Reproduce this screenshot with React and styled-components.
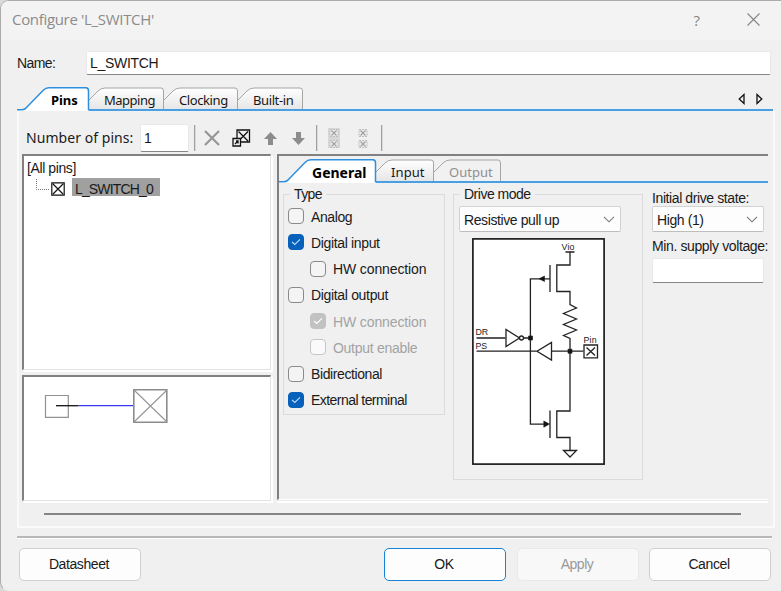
import React from "react";
import styled, { createGlobalStyle, css } from "styled-components";

const GlobalStyle = createGlobalStyle`
  * { box-sizing: border-box; }
  html, body { margin: 0; padding: 0; background: #d9d9d9; overflow: hidden; }
  button { font: inherit; padding: 0; }
  svg { display: block; flex: none; }
`;

const Dialog = styled.div`
  width: 791px;
  height: 591px;
  display: flex;
  flex-direction: column;
  background: #f0f0f0;
  border: 1px solid #ababab;
  border-bottom-color: #f0f0f0;
  border-radius: 9px 9px 0 9px;
  overflow: hidden;
  font-family: "Liberation Sans", Arial, sans-serif;
  font-size: 14px;
  color: #1a1a1a;
`;

const Text = styled.span`
  white-space: pre;
  line-height: 16px;
  letter-spacing: ${(p) => p.$ls ?? -0.4}px;
  color: ${(p) => (p.$muted ? "#a3a3a3" : "inherit")};
`;

const TitleBar = styled.header`
  height: 39px;
  flex: none;
  display: flex;
  align-items: center;
  padding: 0 30px 2px 11px;
  background: #f3f3f3;
  color: #8b8b8b;
  font: 15px "Open Sans", sans-serif;
`;

const Title = styled.span`
  flex: 1;
  letter-spacing: -0.32px;
  padding-bottom: 1px;
`;

const TitleButton = styled.button`
  display: flex;
  border: 0;
  background: none;
  color: #858585;
  font: 15px "Open Sans", sans-serif;
  margin-left: ${(p) => p.$gap || 0}px;
`;

const NameRow = styled.div`
  display: flex;
  align-items: center;
  height: 24px;
  flex: none;
  margin: 11px 19px 0 16px;
`;

const NameLabel = styled.label`
  width: 69px;
  display: flex;
`;

const Field = styled.div`
  display: flex;
  align-items: center;
  width: ${(p) => (p.$w ? `${p.$w}px` : "auto")};
  flex: ${(p) => (p.$w ? "none" : 1)};
  height: ${(p) => p.$h}px;
  padding: 0 0 1px 3px;
  background: #fff;
  border: 1px solid #e8e8e8;
  border-bottom: 1px solid #868686;
  border-radius: 2px;
`;

const TabStrip = styled.div`
  display: flex;
  align-items: flex-end;
  flex: none;
  height: ${(p) => p.$h}px;
  width: ${(p) => (p.$w ? `${p.$w}px` : "auto")};
  border-bottom: 2px solid #4a9fe3;
`;

const TabItem = styled.div`
  position: relative;
  width: ${(p) => p.$w}px;
  height: 24px;
  margin-bottom: -2px;
  padding: 5px 0 0 ${(p) => p.$text}px;
  font: ${(p) => (p.$active ? "bold 13px" : "13px")} "Noto Sans", sans-serif;
  color: ${(p) => (p.$muted ? "#8f8f8f" : "#171717")};
  ${(p) => p.$active && css`z-index: 1; color: #000;`}
`;

const TabShape = styled.svg`
  position: absolute;
  left: 0;
  top: 0;
`;

const TabCaption = styled.span`
  position: relative;
  white-space: pre;
  display: block;
  line-height: 17px;
  letter-spacing: ${(p) => p.$ls}px;
  font-size: ${(p) => p.$size || 13}px;
`;

function Tab({ w, text, ls, size, active, muted, children }) {
  return (
    <TabItem $w={w} $text={text} $active={active} $muted={muted}>
      <TabShape width={w + 1} height="24">
        <defs>
          <linearGradient id="tabFade" x1="0" y1="0" x2="0" y2="1">
            <stop offset="0" stopColor="#ffffff" />
            <stop offset="1" stopColor="#e6e6e6" />
          </linearGradient>
        </defs>
        {active ? (
          <>
            <path d={`M0 24V23H7L26 3.5Q28 1 32 1H${w - 3}Q${w - 0.5} 1 ${w - 0.5} 4V24Z`} fill="#fff" />
            <path d={`M0 22.8H5Q8 22.8 10 20L26 3.5Q28.500 .8 32 .8H${w - 3}Q${w - 0.5} 1 ${w - 0.5} 4V23`} fill="none" stroke="#2f8fdf" strokeWidth="1.5" />
          </>
        ) : (
          <>
            <path d={`M0 22V13L9 4Q12 1 16 1H${w - 3}Q${w - 0.5} 1 ${w - 0.5} 4V22Z`} fill={muted ? "#f1f1f1" : "url(#tabFade)"} />
            <path d={`M0 13L9 4Q12 1 16 1H${w - 3}Q${w - 0.5} 1 ${w - 0.5} 4V22`} fill="none" stroke="#a5a5a5" />
          </>
        )}
      </TabShape>
      <TabCaption $ls={ls} $size={size}>{children}</TabCaption>
    </TabItem>
  );
}

const TabArrows = styled.div`
  display: flex;
  gap: 11px;
  margin: 0 10px 4px auto;
`;

const TabPage = styled.section`
  width: 758px;
  height: 441px;
  margin: 12px 0 0 16px;
  flex: none;
  display: flex;
  flex-direction: column;
`;

const PageBody = styled.div`
  flex: 1;
  display: flex;
  flex-direction: column;
  border: 2px solid #fafafa;
  border-top: 0;
  padding-left: 3px;
`;

const Toolbar = styled.div`
  height: 43px;
  flex: none;
  display: flex;
  align-items: center;
  padding: 11px 0 0 4px;
`;

const CountLabel = styled.label`
  width: 114px;
  white-space: nowrap;
  font: 14px "Noto Sans", sans-serif;
  letter-spacing: 0.05px;
  padding-bottom: 2px;
`;

const Divider = styled.i`
  width: 2px;
  height: 26px;
  background: #a0a0a0;
  border-right: 1px solid #dadada;
  margin: 0 ${(p) => p.$after || 0}px 0 ${(p) => p.$before}px;
`;

const ToolButton = styled.button`
  display: flex;
  border: 0;
  background: none;
  margin-left: ${(p) => p.$gap}px;
`;

const Panes = styled.div`
  display: flex;
  gap: 6px;
  height: 348px;
`;

const LeftColumn = styled.div`
  width: 249px;
  display: flex;
  flex-direction: column;
  gap: 5px;
`;

const Sunken = styled.div`
  height: ${(p) => p.$h}px;
  width: ${(p) => (p.$w ? `${p.$w}px` : "auto")};
  background: ${(p) => p.$bg || "#fff"};
  border: 2px solid #818181;
  border-right: ${(p) => (p.$bg ? "0" : "1px solid #e2e2e2")};
  border-bottom: 1px solid ${(p) => (p.$bg ? "#fff" : "#e2e2e2")};
  box-shadow: ${(p) => (p.$bg ? "0 1px 0 #e8e8e8, 0 3px 0 #fff" : "2px 2px 0 #fff")};
`;

const TreeRoot = styled.div`
  display: flex;
  padding: 4px 0 0 3px;
`;

const TreeLeaf = styled.div`
  display: flex;
  align-items: flex-end;
  padding-left: 12px;
  height: 20px;
`;

const Selected = styled.div`
  width: 88px;
  height: 18px;
  margin: 0 0 0 7px;
  padding: 3px 0 0 3px;
  display: flex;
  background: #a0a0a0;
  line-height: 15px;
`;

const GeneralPage = styled.div`
  display: flex;
  align-items: flex-start;
  padding: 3px 0 0 4px;
`;

const Group = styled.fieldset`
  width: ${(p) => p.$w}px;
  height: ${(p) => p.$h}px;
  min-width: 0;
  flex: none;
  margin: 0 ${(p) => p.$gap}px 0 0;
  padding: 0;
  border: 1px solid #dcdcdc;
`;

const Legend = styled.legend`
  height: 16px;
  display: flex;
  margin-left: 6px;
  padding: 0 4px;
`;

const CheckList = styled.div`
  padding-top: 1px;
`;

const CheckRow = styled.div`
  height: 26.25px;
  display: flex;
  align-items: center;
  gap: 7px;
  padding-left: ${(p) => (p.$indent ? 26 : 4)}px;
`;

const CheckText = styled(Text)`
  padding-top: 1px;
`;

const Box = styled.span`
  width: 16px;
  height: 16px;
  display: flex;
  align-items: center;
  justify-content: center;
  border-radius: 4px;
  border: 1.5px solid ${(p) => (p.$disabled ? "#c6c6c6" : "#8a8a8a")};
  background: ${(p) => (p.$disabled ? "#fafafa" : "#f4f4f4")};
  ${(p) => p.$checked && css`
    border-color: ${p.$disabled ? "#c2c2c2" : "#0760b9"};
    background: ${p.$disabled ? "#c2c2c2" : "#0760b9"};
  `}
`;

function Check({ label, ls, indent, checked, disabled }) {
  return (
    <CheckRow $indent={indent}>
      <Box $checked={checked} $disabled={disabled}>
        {checked && (
          <svg width="10" height="8" fill="none" stroke={disabled ? "#fff" : "#b9dcff"} strokeWidth="1.1">
            <path d="M1 4L3.8 6.500L9 1.300" />
          </svg>
        )}
      </Box>
      <CheckText $ls={ls} $muted={disabled}>{label}</CheckText>
    </CheckRow>
  );
}

const Combo = styled.div`
  width: ${(p) => p.$w}px;
  height: 26px;
  display: flex;
  align-items: center;
  justify-content: space-between;
  padding: 1px 5px 0 4px;
  background: #fdfdfd;
  border: 1px solid #d2d2d2;
  border-bottom-color: #bdbdbd;
  border-radius: 2px;
`;

const Chevron = () => (
  <svg width="12" height="7" fill="none" stroke="#777" strokeWidth="1.1"><path d="M1 .8L6 5.800L11 .8" /></svg>
);

const DriveContent = styled.div`
  padding: 4px 0 0 5px;
`;

const Diagram = styled.div`
  margin: 6px 0 0 13px;
`;

const SideColumn = styled.div`
  display: flex;
  flex-direction: column;
  align-items: flex-start;
  padding-top: 4px;
`;

const SupplyLabel = styled.div`
  display: flex;
  margin: 6px 0 4px;
`;

const ScrollLine = styled.div`
  width: 697px;
  height: 2px;
  flex: none;
  margin: 11px 0 0 22px;
  background: #858585;
`;

const Rule = styled.div`
  width: 755px;
  height: 3px;
  flex: none;
  margin: 8px 0 0 16px;
  background: #fff;
  border-top: 2px solid #b8b8b8;
`;

const Footer = styled.footer`
  display: flex;
  padding: 9px 0 0 18px;
`;

const PushButton = styled.button`
  width: 122px;
  height: 33px;
  display: flex;
  align-items: center;
  justify-content: center;
  padding: 0 2px 2px 0;
  margin-right: ${(p) => p.$after || 0}px;
  background: ${(p) => (p.$disabled ? "#f8f8f8" : "#fdfdfd")};
  border: ${(p) => (p.$primary ? "1.5px solid #1683d8" : p.$disabled ? "1px solid #e9e9e9" : "1px solid #cecece")};
  border-radius: 5px;
  color: ${(p) => (p.$disabled ? "#999" : "#1a1a1a")};
`;

const PinBox = ({ size = 14 }) => (
  <svg width={size} height={size} fill="none" stroke="#111">
    <path d={`M.8.8H${size - 0.8}V${size - 0.8}H.8ZM2 2L${size - 2} ${size - 2}M${size - 2} 2L2 ${size - 2}`} strokeWidth="1.2" />
  </svg>
);

const FadedPins = ({ plain }) => (
  <svg width="12" height="20" fill="none" stroke="#a1a1a1">
    {!plain && <path d="M0 0H12V20H0Z" fill="#d7d7d7" stroke="none" />}
    <path d="M2 1.500H10V8.500H2ZM2 12.500H10V19.500H2Z" stroke="#bcbcbc" fill="#ededed" strokeDasharray="2 1" />
    <path d="M3.500 2.500L8.500 7.500M8.500 2.500L3.500 7.500M3.500 13.500L8.500 18.500M8.500 13.500L3.500 18.500" strokeWidth="1.2" />
  </svg>
);

const DriveSchematic = () => (
  <svg width="133" height="227" viewBox="472.500 237.500 133 227" fill="none" stroke="#222" strokeWidth="1.300">
    <rect x="473.400" y="238.400" width="131.200" height="225.200" fill="#fff" stroke="#111" strokeWidth="1.600" />
    <path d="M566 251.500H575M570.500 251V264.500H557.300V291H570.500V304L577 307.500L564 313L577 318.500L564 324L577 329.500L564 335L570.500 338V410.500H557.300V437H570.500V450" />
    <path d="M550.500 264.500V291.500M550.500 410V437.500M550.500 278.300H530.900V423.600H546" />
    <path d="M477 337.500H506M477 350.700H537M552 350.700H584M524 337.500H531" />
    <path d="M506.500 329V346L520 337.500ZM552 342V359.500L537.500 350.700Z" fill="#fff" />
    <circle cx="522" cy="337.500" r="2" fill="#fff" />
    <path d="M539.500 278.300L545 275.500V281ZM550 423.600L544.300 420.500V426.700Z" fill="#111" strokeWidth=".6" />
    <path d="M529 335.500H533V339.500H529ZM568.500 348.700H572.500V352.700H568.500Z" fill="#111" strokeWidth=".7" />
    <path d="M584.500 344.500H598V357.300H584.500ZM587 347L595.500 355M595.500 347L587 355" />
    <path d="M564 450H577L570.500 456.500Z" />
    <g fill="#222" stroke="none" fontFamily="Liberation Sans, sans-serif" fontSize="8.800">
      <text x="562" y="249.500" letterSpacing=".2">Vio</text>
      <text x="476" y="334.800">DR</text>
      <text x="476" y="348.200">PS</text>
      <text x="584" y="342" letterSpacing=".2">Pin</text>
    </g>
  </svg>
);

const PinPreview = () => (
  <svg width="246" height="120" viewBox="24 377 246 120" fill="none">
    <path d="M45.500 395.500H68.300V417.300H45.500Z" stroke="#929292" strokeWidth="1.200" />
    <path d="M56 405.700H78.500" stroke="#111" strokeWidth="1.300" />
    <path d="M78.500 405.700H133" stroke="#3838ee" strokeWidth="1.300" />
    <path d="M133.800 389.800H166.800V422.200H133.800Z" stroke="#8c8c8c" strokeWidth="1.600" />
    <path d="M134 390L167 422M167 390L134 422" stroke="#959595" strokeWidth="1.100" />
  </svg>
);

export default function App() {
  return (
    <>
      <GlobalStyle />
      <Dialog>
        <TitleBar>
          <Title>Configure 'L_SWITCH'</Title>
          <TitleButton>?</TitleButton>
          <TitleButton $gap={47}>
            <svg width="13" height="13" stroke="#858585" strokeWidth="1.1"><path d="M.5.5L12.500 12.500M12.500.5L.5 12.500" /></svg>
          </TitleButton>
        </TitleBar>
        <NameRow>
          <NameLabel><Text $ls={-0.6}>Name:</Text></NameLabel>
          <Field $h={24}><Text $ls={-0.3}>L_SWITCH</Text></Field>
        </NameRow>

        <TabPage>
          <TabStrip $h={24} $w={756}>
            <Tab w={72} text={34} ls={-0.05} active>Pins</Tab>
            <Tab w={75} text={15} ls={-0.5}>Mapping</Tab>
            <Tab w={74} text={15} ls={-0.4}>Clocking</Tab>
            <Tab w={65} text={15} ls={-0.4}>Built-in</Tab>
            <TabArrows>
              <svg width="7" height="12" fill="none" stroke="#111" strokeWidth="1.300"><path d="M6 1.500V10.500L1.200 6Z" /></svg>
              <svg width="7" height="12" fill="none" stroke="#111" strokeWidth="1.300"><path d="M1 1.500V10.500L5.800 6Z" /></svg>
            </TabArrows>
          </TabStrip>
          <PageBody>
            <Toolbar>
              <CountLabel>Number of pins:</CountLabel>
              <Field $h={28} $w={49}><Text>1</Text></Field>
              <Divider $before={5} />
              <ToolButton $gap={8}>
                <svg width="16" height="16" stroke="#969696" strokeWidth="2.200"><path d="M1 1L15 15M15 1L1 15" /></svg>
              </ToolButton>
              <ToolButton $gap={12}>
                <svg width="19" height="18" fill="none" stroke="#111" strokeWidth="1.300">
                  <path d="M5 1H17.500V13H5ZM6.500 2.500L16 12M16 2.500L6.500 12" />
                  <path d="M1 9.500H8.500V17H1Z" fill="#f0f0f0" /><path d="M3 15L6 12M4 12H6V14.500" />
                </svg>
              </ToolButton>
              <ToolButton $gap={13}>
                <svg width="13" height="13" fill="#8c8c8c"><path d="M6.500 0L13 7H9V13H4V7H0Z" /></svg>
              </ToolButton>
              <ToolButton $gap={15}>
                <svg width="13" height="13" fill="#8c8c8c"><path d="M6.500 13L13 6H9V0H4V6H0Z" /></svg>
              </ToolButton>
              <Divider $before={11} $after={10} />
              <ToolButton $gap={0}><FadedPins /></ToolButton>
              <ToolButton $gap={17}><FadedPins plain /></ToolButton>
              <Divider $before={12} />
            </Toolbar>
            <Panes>
              <LeftColumn>
                <Sunken $h={216}>
                  <TreeRoot><Text>[All pins]</Text></TreeRoot>
                  <TreeLeaf>
                    <svg width="15" height="17" fill="none" stroke="#777" strokeDasharray="1 1"><path d="M.5 0V10.500H14" /></svg>
                    <PinBox />
                    <Selected><Text $ls={-0.85}>L_SWITCH_0</Text></Selected>
                  </TreeLeaf>
                </Sunken>
                <Sunken $h={126}><PinPreview /></Sunken>
              </LeftColumn>
              <Sunken $h={346} $w={491} $bg="#f0f0f0">
                <TabStrip $h={27}>
                  <Tab w={97} text={33} ls={0} size={14} active>General</Tab>
                  <Tab w={58} text={15} ls={0.1}>Input</Tab>
                  <Tab w={67} text={15} ls={0} muted>Output</Tab>
                </TabStrip>
                <GeneralPage>
                  <Group $w={162} $h={229} $gap={8}>
                    <Legend><Text $ls={-0.6}>Type</Text></Legend>
                    <CheckList>
                      <Check label="Analog" />
                      <Check label="Digital input" checked ls={-0.35} />
                      <Check label="HW connection" indent ls={-0.12} />
                      <Check label="Digital output" ls={-0.33} />
                      <Check label="HW connection" indent checked disabled ls={-0.12} />
                      <Check label="Output enable" indent disabled ls={-0.28} />
                      <Check label="Bidirectional" />
                      <Check label="External terminal" checked ls={-0.55} />
                    </CheckList>
                  </Group>
                  <Group $w={190} $h={294} $gap={9}>
                    <Legend><Text $ls={-0.5}>Drive mode</Text></Legend>
                    <DriveContent>
                      <Combo $w={162}><Text>Resistive pull up</Text><Chevron /></Combo>
                      <Diagram><DriveSchematic /></Diagram>
                    </DriveContent>
                  </Group>
                  <SideColumn>
                    <Text>Initial drive state:</Text>
                    <Combo $w={112}><Text>High (1)</Text><Chevron /></Combo>
                    <SupplyLabel><Text $ls={-0.38}>Min. supply voltage:</Text></SupplyLabel>
                    <Field $w={112} $h={25} />
                  </SideColumn>
                </GeneralPage>
              </Sunken>
            </Panes>
            <ScrollLine />
          </PageBody>
        </TabPage>
        <Rule />
        <Footer>
          <PushButton $after={243}><Text>Datasheet</Text></PushButton>
          <PushButton $after={11} $primary><Text $ls={-0.3}>OK</Text></PushButton>
          <PushButton $after={10} $disabled disabled><Text $ls={-0.5}>Apply</Text></PushButton>
          <PushButton><Text>Cancel</Text></PushButton>
        </Footer>
      </Dialog>
    </>
  );
}
